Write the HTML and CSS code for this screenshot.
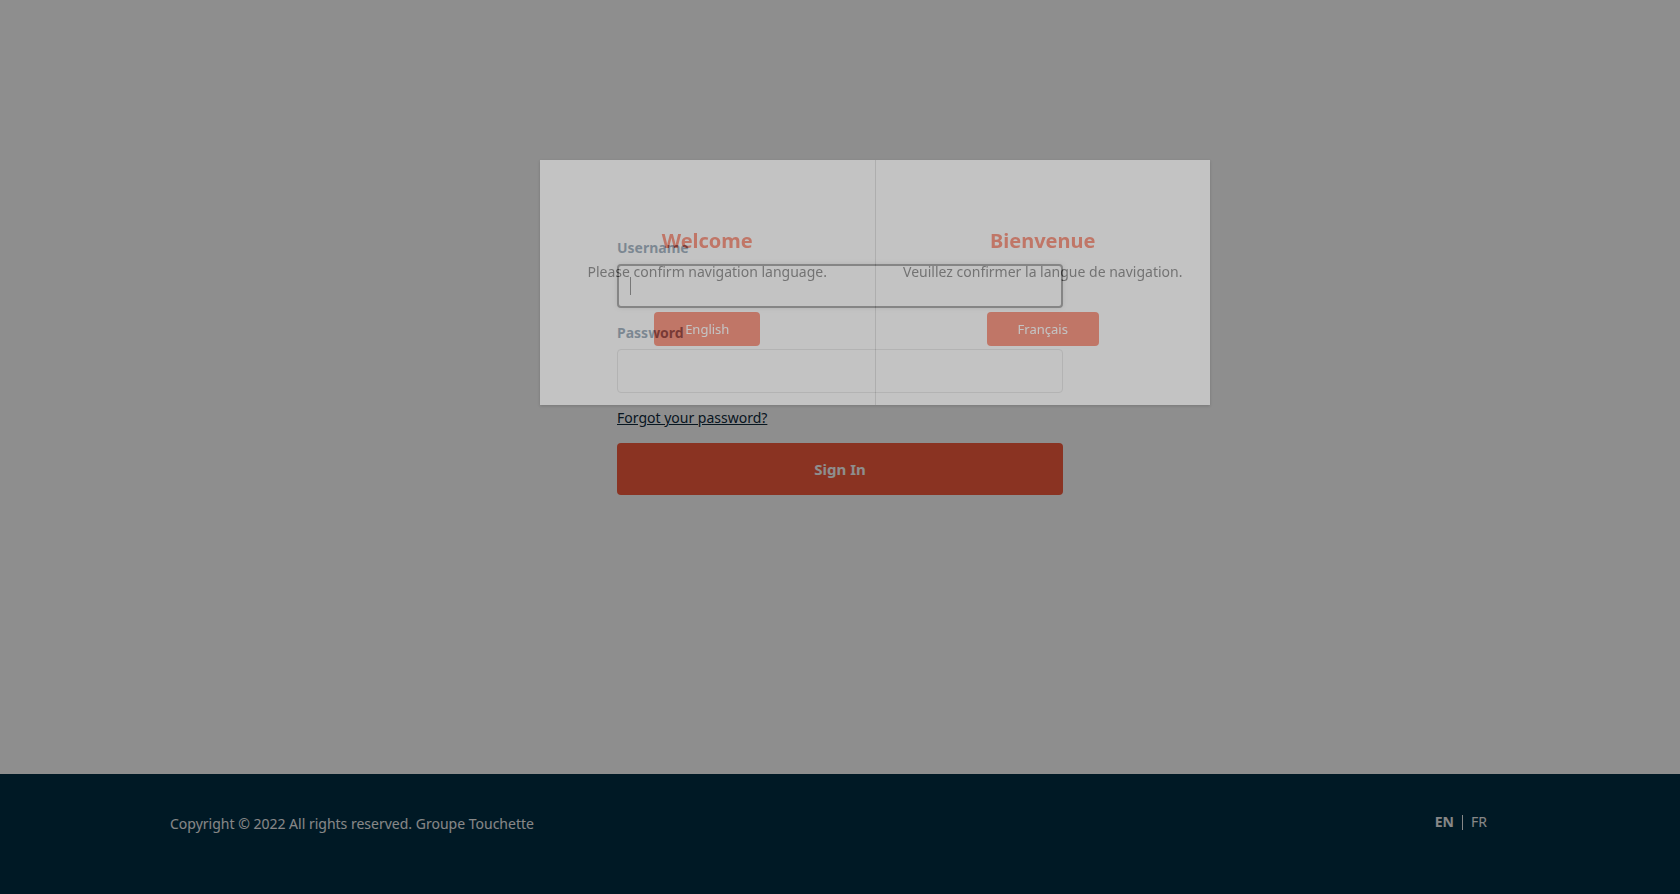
FILE: index.html
```html
<!DOCTYPE html>
<html lang="en">
<head>
<meta charset="utf-8">
<title>Sign In</title>
<link rel="stylesheet" href="styles.css">
</head>
<body>
<div class="page">
  <main class="main">
    <form class="login">
      <label class="label" for="username">Username</label>
      <div class="field field-focus">
        <input class="input" id="username" type="text">
        <span class="caret"></span>
      </div>
      <label class="label" for="password">Password</label>
      <div class="field">
        <input class="input" id="password" type="password">
      </div>
      <a class="forgot" href="#">Forgot your password?</a>
      <button class="signin" type="button">Sign In</button>
    </form>
  </main>
  <footer class="footer">
    <div class="copyright">Copyright © 2022 All rights reserved. Groupe Touchette</div>
    <div class="langs">
      <a class="lang lang-active" href="#">EN</a>
      <span class="lang-sep"></span>
      <a class="lang" href="#">FR</a>
    </div>
  </footer>
</div>
<div class="backdrop"></div>
<div class="modal">
  <div class="modal-col modal-col-left">
    <h2 class="modal-title">Welcome</h2>
    <p class="modal-text">Please confirm navigation language.</p>
    <button class="modal-btn english" type="button">English</button>
  </div>
  <div class="modal-col">
    <h2 class="modal-title">Bienvenue</h2>
    <p class="modal-text">Veuillez confirmer la langue de navigation.</p>
    <button class="modal-btn francais" type="button">Français</button>
  </div>
</div>
</body>
</html>
```
FILE: styles.css
```css
* { box-sizing: border-box; }
html, body { margin: 0; padding: 0; height: 100%; }
body {
  font-family: "Noto Sans", "Open Sans", sans-serif;
  background: #ffffff;
  color: #333;
}
.page {
  display: flex;
  flex-direction: column;
  height: 894px;
}
.main {
  flex: 1;
  padding-top: 238px;
}
.login {
  width: 446px;
  margin: 0 auto;
  display: flex;
  flex-direction: column;
}
.label {
  font-size: 14px;
  line-height: 20px;
  font-weight: 700;
  color: #0c3658;
  margin-bottom: 6px;
}
.field {
  position: relative;
  height: 44px;
  margin-bottom: 15px;
}
.input {
  width: 100%;
  height: 44px;
  border: 1px solid #c9c9c9;
  border-radius: 4px;
  background: #fff;
  font-family: inherit;
  font-size: 14px;
  padding: 0 12px;
  outline: none;
}
.field-focus .input {
  border: 2px solid #2e2e2e;
  box-shadow: 0 0 4px rgba(0, 0, 0, 0.25);
}
.caret {
  position: absolute;
  left: 13px;
  top: 13px;
  width: 1px;
  height: 18px;
  background: #000;
}
.forgot {
  font-size: 14px;
  line-height: 20px;
  color: #0f2a3c;
  text-decoration: underline;
  align-self: flex-start;
  margin-bottom: 15px;
}
.signin {
  height: 52px;
  border: none;
  border-radius: 4px;
  background: #f85c3d;
  color: #fff;
  font-family: inherit;
  font-size: 15px;
  font-weight: 700;
}
.footer {
  height: 120px;
  background: #002d44;
  display: flex;
  justify-content: space-between;
  align-items: flex-start;
  padding: 38px 193px 0 170px;
  color: #f2f2f2;
  font-size: 14px;
  line-height: 20px;
}
.copyright { padding-top: 2px; }
.langs {
  display: flex;
  align-items: center;
  gap: 8px;
}
.lang {
  color: #f2f2f2;
  text-decoration: none;
}
.lang-active { font-weight: 700; }
.lang-sep {
  width: 1px;
  height: 15px;
  background: #f2f2f2;
}
.backdrop {
  position: fixed;
  inset: 0;
  background: rgba(0, 0, 0, 0.443);
}
.modal {
  position: absolute;
  left: 540px;
  top: 160px;
  width: 670px;
  height: 245px;
  background: #fff;
  opacity: 0.47;
  display: flex;
  box-shadow: 0 1px 3px rgba(0, 0, 0, 0.35);
}
.modal-col {
  flex: 1;
  display: flex;
  flex-direction: column;
  align-items: center;
  padding-top: 67px;
}
.modal-col-left { border-right: 1px solid #d2d2d2; }
.modal-title {
  margin: 0 0 7px;
  font-size: 20px;
  line-height: 28px;
  font-weight: 700;
  color: #f85c3d;
}
.modal-text {
  margin: 0 0 30px;
  font-size: 14px;
  line-height: 20px;
  color: #555;
  white-space: nowrap;
}
.modal-btn {
  height: 34px;
  padding: 0 31px;
  border: none;
  border-radius: 4px;
  background: #f85c3d;
  color: #fff;
  font-family: inherit;
  font-size: 13px;
}
```
